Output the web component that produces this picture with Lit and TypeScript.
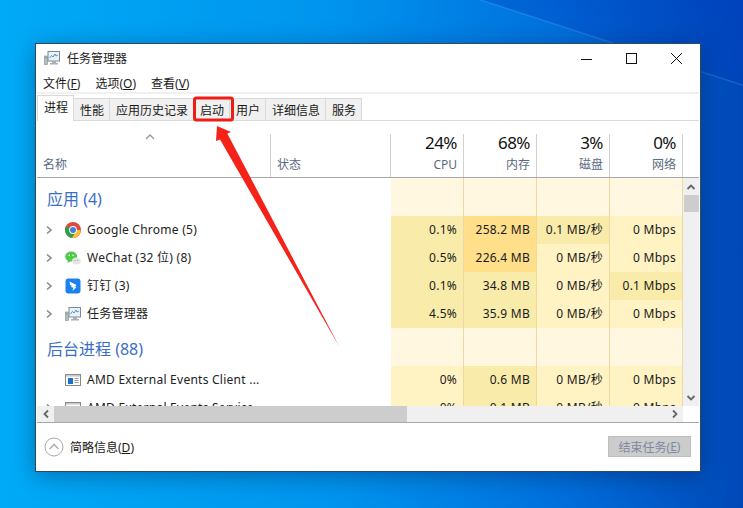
import { LitElement, html, css, svg } from "lit";
import { customElement } from "lit/decorators.js";

type Row = { icon: string; name: string; exp: boolean; cells: [string, string][] };

const chrome = svg`<svg class="ico" viewBox="0 0 16 16"><circle cx="8" cy="8" r="8" fill="#dd4b3e"/><path d="M8 8 1 4.2A8 8 0 0 0 8 16l3.8-6z" fill="#2f9e4a"/><path d="M8 8h7.6A8 8 0 0 1 7 16l3.5-6z" fill="#fbc02d"/><circle cx="8" cy="8" r="3.9" fill="#fff"/><circle cx="8" cy="8" r="3" fill="#3f7fe0"/></svg>`;
const wechat = svg`<svg class="ico" viewBox="0 0 16 16"><ellipse cx="6.2" cy="6.6" rx="6" ry="5" fill="#4fcb4a"/><path d="M3 10l-.6 3 3-1.6z" fill="#4fcb4a"/><circle cx="4.3" cy="5.4" r=".8" fill="#fff"/><circle cx="8" cy="5.4" r=".8" fill="#fff"/><ellipse cx="11.4" cy="11" rx="4.4" ry="3.6" fill="#e6e6e6"/><circle cx="10" cy="10.4" r=".6" fill="#999"/><circle cx="12.8" cy="10.4" r=".6" fill="#999"/></svg>`;
const ding = svg`<svg class="ico" viewBox="0 0 16 16"><rect x=".5" y=".5" width="15" height="15" rx="3" fill="#1a82f0"/><path d="M4.500 3.500 11.500 7l-1.500 2h1.600L7.500 13l.9-3.300L6 9l.8-1.300L5 7z" fill="#fff"/></svg>`;
const taskmgr = svg`<svg class="ico" viewBox="0 0 16 16"><rect x="4" y="1.500" width="11.500" height="9.500" fill="#eaf2f8" stroke="#7d8a94"/><path d="M5.500 8l2-2.500 1.500 1.500 2-3 1 2 2-1" fill="none" stroke="#3a8fc8" stroke-width=".9"/><path d="M8 11h4v2h2v1.500H6V13h2z" fill="#a9b0b5"/><rect x=".5" y="6" width="3" height="8.500" fill="#b5bcc0" stroke="#7d8a94" stroke-width=".6"/><rect x="1.200" y="7" width="1.600" height="1.200" fill="#58b858"/></svg>`;
const appwin = svg`<svg class="ico" viewBox="0 0 16 16"><rect x=".5" y="2.500" width="15" height="11" fill="#fff" stroke="#8a8a8a"/><rect x="1" y="3" width="14" height="1.600" fill="#c8c8c8"/><rect x="3" y="6" width="5" height="6" fill="#1a6fd0"/><path d="M9.500 6.500h4M9.500 8.500h4M9.500 10.500h4" stroke="#9a9a9a"/></svg>`;
const icons: Record<string, unknown> = { chrome, wechat, ding, taskmgr, appwin };

const L = "l", M = "m", H = "h";
const apps: Row[] = [
  { icon: "chrome", name: "Google Chrome (5)", exp: true, cells: [["0.1%", M], ["258.2 MB", H], ["0.1 MB/秒", M], ["0 Mbps", L]] },
  { icon: "wechat", name: "WeChat (32 位) (8)", exp: true, cells: [["0.5%", M], ["226.4 MB", H], ["0 MB/秒", L], ["0 Mbps", L]] },
  { icon: "ding", name: "钉钉 (3)", exp: true, cells: [["0.1%", M], ["34.8 MB", M], ["0 MB/秒", L], ["0.1 Mbps", M]] },
  { icon: "taskmgr", name: "任务管理器", exp: true, cells: [["4.5%", M], ["35.9 MB", M], ["0 MB/秒", L], ["0 Mbps", L]] },
];
const bg: Row[] = [
  { icon: "appwin", name: "AMD External Events Client ...", exp: false, cells: [["0%", L], ["0.6 MB", M], ["0 MB/秒", L], ["0 Mbps", L]] },
  { icon: "appwin", name: "AMD External Events Service ...", exp: true, cells: [["0%", L], ["0.1 MB", M], ["0 MB/秒", L], ["0 Mbps", L]] },
];
const tabs = ["进程", "性能", "应用历史记录", "启动", "用户", "详细信息", "服务"];

const chev = (d: string) => svg`<svg class="chev" viewBox="0 0 10 10"><path d=${d} fill="none" stroke="#666" stroke-width="1.8"/></svg>`;

@customElement("app-root")
export class AppRoot extends LitElement {
  static styles = css`
    :host { display: block; position: relative; width: 743px; height: 508px; overflow: hidden; box-sizing: border-box; padding: 44px 0 0 36px;
      background:
        linear-gradient(18deg, transparent 88.45%, rgba(120,190,255,.22) 88.6%, rgba(0,60,190,.3) 88.8%, rgba(0,60,190,.5) 100%),
        linear-gradient(90deg, #00aaf6 0%, #0094ee 45%, #0070dc 75%, #0048b8 100%);
      font-family: "Noto Sans", "Noto Sans CJK SC", sans-serif; font-size: 12px; color: #1a1a1a; }
    .win { width: 664px; height: 427px; box-sizing: border-box; background: #fff; border: 1px solid #fff; display: flex; flex-direction: column; box-shadow: 0 0 0 1px #2b4a63, 0 4px 22px rgba(0,20,60,.4); }
    .title { height: 26px; display: flex; align-items: center; padding-left: 7px; gap: 7px; flex: none; }
    .title .ico { width: 16px; height: 16px; margin: 0; }
    .title .t { flex: 1; color: #222; }
    .ctrls { display: flex; align-items: center; }
    .ctrls svg { width: 45px; height: 26px; display: block; }
    .menu { height: 21px; display: flex; align-items: center; padding: 2px 0 0 6px; box-sizing: border-box; gap: 15px; flex: none; }
    u { text-decoration: underline; text-underline-offset: 1px; }
    .sep { height: 2px; background: #f0f0f0; flex: none; }
    .tabs { height: 27px; display: flex; align-items: flex-end; border-bottom: 1px solid #d9d9d9; box-sizing: border-box; flex: none; }
    .tab { height: 22px; box-sizing: border-box; padding: 0 5px 0 6px; display: flex; align-items: center; background: #f0f0f0; border-top: 1px solid #d9d9d9; border-right: 1px solid #d9d9d9; }
    .tab.sel { height: 26px; background: #fff; padding: 0 5px 3px 6px; border-left: 1px solid #d9d9d9; margin-bottom: -1px; }
    .head { height: 57px; display: grid; grid-template-columns: 234px 120px repeat(4, 73px); border-bottom: 1px solid #a8a8a8; box-sizing: border-box; flex: none; }
    .hc { position: relative; margin-top: 13px; border-right: 1px solid #d0d0d0; text-align: right; padding-right: 6px; display: flex; flex-direction: column; color: #5a6a80; }
    .hc .pct { font-size: 17px; line-height: 18px; color: #111; letter-spacing: -.5px; }
    .hc .lb { line-height: 20px; margin-top: 3px; }
    .hc.left { text-align: left; padding-left: 6px; }
    .hc.left .lb { margin-top: 21px; }
    .caret { position: absolute; left: 108px; top: -2px; width: 10px; height: 10px; }
    .mid { flex: none; height: 228px; display: flex; }
    .rows { width: 646px; overflow: hidden; }
    .vs { width: 16px; background: #f0f0f0; display: flex; flex-direction: column; align-items: center; justify-content: space-between; }
    .vs .arrow { height: 17px; display: flex; align-items: center; justify-content: center; }
    .vs .thumb { width: 15px; height: 17px; background: #cdcdcd; }
    .vs .top { display: flex; flex-direction: column; align-items: center; }
    .chev { width: 10px; height: 10px; display: block; }
    .row { display: grid; grid-template-columns: 234px 120px repeat(4, 73px); height: 28px; letter-spacing: .25px; }
    .group { height: 38px; letter-spacing: 0; }
    .gt { font-size: 16px; color: #3a6fc6; display: flex; align-items: center; padding: 2px 0 0 10px; white-space: nowrap; }
    .nm { display: flex; align-items: center; min-width: 0; white-space: nowrap; color: #222; padding-bottom: 2px; box-sizing: border-box; }
    .exp { width: 10px; height: 10px; margin: 2px 11px 0 7px; flex: none; display: block; }
    .ico { width: 16px; height: 16px; margin: 2px 6px 0 0; flex: none; display: block; }
    .c { border-right: 1px solid #efd9a0; text-align: right; padding: 0 6px 2px 0; display: flex; align-items: center; justify-content: flex-end; white-space: nowrap; }
    .e { background: #fff7e0; }
    .l { background: #fff3c4; }
    .m { background: #f9ecaa; }
    .h { background: #ffdf8a; }
    .hs { height: 16px; display: flex; flex: none; }
    .hs .tr { width: 646px; background: #f0f0f0; display: flex; align-items: center; }
    .hs .btn { width: 17px; display: flex; justify-content: center; flex: none; }
    .hs .th { width: 353px; height: 16px; background: #cdcdcd; flex: none; }
    .hs .fill { flex: 1; }
    .foot { border-top: 1px solid #a8a8a8; flex: 1; display: flex; align-items: center; justify-content: space-between; padding: 0 8px 0 7px; }
    .more { display: flex; align-items: center; gap: 6px; }
    .more svg { width: 20px; height: 20px; display: block; }
    .end { width: 83px; height: 21px; box-sizing: border-box; background: #ccc; border: 1px solid #bfbfbf; color: #8088a0; display: flex; align-items: center; justify-content: center; }
    .mark { position: absolute; left: 0; top: 0; width: 743px; height: 508px; pointer-events: none; }
  `;

  private row(r: Row) {
    return html`<div class="row">
      <div class="nm">
        ${r.exp ? html`<svg class="exp" viewBox="0 0 10 10"><path d="M3 1.500 7 5 3 8.500" fill="none" stroke="#8a8a8a" stroke-width="1.600"/></svg>` : html`<span class="exp"></span>`}
        ${icons[r.icon]}<span>${r.name}</span>
      </div>
      <div></div>
      ${r.cells.map(([v, h]) => html`<div class="c ${h}">${v}</div>`)}
    </div>`;
  }

  private group(t: string) {
    return html`<div class="row group">
      <div class="gt">${t}</div><div></div>
      ${[0, 1, 2, 3].map(() => html`<div class="c e"></div>`)}
    </div>`;
  }

  render() {
    return html`
      <div class="win">
        <div class="title">
          ${taskmgr}<span class="t">任务管理器</span>
          <div class="ctrls">
            <svg viewBox="0 0 45 26"><path d="M17 14.500h11" stroke="#111" fill="none"/></svg>
            <svg viewBox="0 0 45 26"><rect x="17.500" y="8.500" width="10" height="10" stroke="#111" fill="none"/></svg>
            <svg viewBox="0 0 45 26"><path d="M17 8l11 11M28 8 17 19" stroke="#111" fill="none"/></svg>
          </div>
        </div>
        <div class="menu">
          <span>文件(<u>F</u>)</span><span>选项(<u>O</u>)</span><span>查看(<u>V</u>)</span>
        </div>
        <div class="sep"></div>
        <div class="tabs">
          ${tabs.map((t, i) => html`<div class="tab ${i === 0 ? "sel" : ""}">${t}</div>`)}
        </div>
        <div class="head">
          <div class="hc left"><svg class="caret" viewBox="0 0 10 10"><path d="M1 7l4-4 4 4" fill="none" stroke="#999" stroke-width="1.300"/></svg><span class="lb">名称</span></div>
          <div class="hc left"><span class="lb">状态</span></div>
          <div class="hc"><span class="pct">24%</span><span class="lb">CPU</span></div>
          <div class="hc"><span class="pct">68%</span><span class="lb">内存</span></div>
          <div class="hc"><span class="pct">3%</span><span class="lb">磁盘</span></div>
          <div class="hc"><span class="pct">0%</span><span class="lb">网络</span></div>
        </div>
        <div class="mid">
          <div class="rows">
            ${this.group("应用 (4)")}
            ${apps.map((r) => this.row(r))}
            ${this.group("后台进程 (88)")}
            ${bg.map((r) => this.row(r))}
          </div>
          <div class="vs">
            <div class="top">
              <div class="arrow">${chev("M1.500 7 5 3.500 8.500 7")}</div>
              <div class="thumb"></div>
            </div>
            <div class="arrow">${chev("M1.500 3 5 6.500 8.500 3")}</div>
          </div>
        </div>
        <div class="hs">
          <div class="tr">
            <div class="btn">${chev("M7 1.500 3.500 5 7 8.500")}</div>
            <div class="th"></div>
            <div class="fill"></div>
            <div class="btn">${chev("M3 1.500 6.500 5 3 8.500")}</div>
          </div>
        </div>
        <div class="foot">
          <div class="more">
            <svg viewBox="0 0 20 20"><circle cx="10" cy="10" r="9" fill="#fff" stroke="#aaa"/><path d="M5.500 12 10 7.500l4.500 4.500" fill="none" stroke="#aaa" stroke-width="1.300"/></svg>
            <span>简略信息(<u>D</u>)</span>
          </div>
          <div class="end">结束任务(<u>E</u>)</div>
        </div>
      </div>
      <svg class="mark" viewBox="0 0 743 508">
        <rect x="194.500" y="98" width="38" height="22" rx="2" fill="none" stroke="#ee1c12" stroke-width="3"/>
        <polygon points="217,126 231,132 227.300,133.500 339.500,347 220,139.500 216,141" fill="#f5221a"/>
      </svg>
    `;
  }
}
